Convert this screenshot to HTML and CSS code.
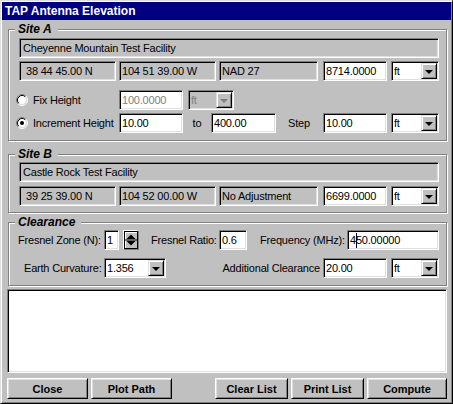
FILE: index.html
```html
<!DOCTYPE html>
<html lang="en">
<head>
    <meta charset="UTF-8">
    <title>TAP Antenna Elevation</title>
    <link rel="stylesheet" href="styles.css">
</head>
<body>
<div class="window">
    <div class="titlebar">TAP Antenna Elevation</div>
    <div class="main">
        <!-- site A -->
        <div class="group site-a">
            <div class="legend">Site A</div>
            <div class="field ro name">Cheyenne Mountain Test Facility</div>
            <div class="row">
                <div class="field ro coord indent">38 44 45.00 N</div>
                <div class="field ro coord">104 51 39.00 W</div>
                <div class="field ro datum">NAD 27</div>
                <div class="field elev">8714.0000</div>
                <div class="combo unit"><span>ft</span><i class="drop"></i></div>
            </div>
            <div class="row fix-row">
                <span class="radio">
                    <svg width="12" height="12" viewBox="0 0 12 12">
                        <circle cx="6" cy="6" r="4.5" fill="#fff"/>
                        <path d="M2.11 9.89A5.5 5.5 0 0 1 9.89 2.11" fill="none" stroke="#808080"/>
                        <path d="M9.89 2.11A5.5 5.5 0 0 1 2.11 9.89" fill="none" stroke="#fff"/>
                        <path d="M2.82 9.18A4.5 4.5 0 0 1 9.18 2.82" fill="none" stroke="#000"/>
                        <path d="M9.18 2.82A4.5 4.5 0 0 1 2.82 9.18" fill="none" stroke="#dfdfdf"/>
                    </svg>
                </span>
                <span class="radio-label">Fix Height</span>
                <div class="field num dim">100.0000</div>
                <div class="combo unit-sm off"><span>ft</span><i class="drop"></i></div>
            </div>
            <div class="row">
                <span class="radio">
                    <svg width="12" height="12" viewBox="0 0 12 12">
                        <circle cx="6" cy="6" r="4.5" fill="#fff"/>
                        <path d="M2.11 9.89A5.5 5.5 0 0 1 9.89 2.11" fill="none" stroke="#808080"/>
                        <path d="M9.89 2.11A5.5 5.5 0 0 1 2.11 9.89" fill="none" stroke="#fff"/>
                        <path d="M2.82 9.18A4.5 4.5 0 0 1 9.18 2.82" fill="none" stroke="#000"/>
                        <path d="M9.18 2.82A4.5 4.5 0 0 1 2.82 9.18" fill="none" stroke="#dfdfdf"/>
                        <circle cx="6" cy="6" r="2" fill="#000"/>
                    </svg>
                </span>
                <span class="radio-label">Increment Height</span>
                <div class="field num">10.00</div>
                <span class="lbl to">to</span>
                <div class="field num wide">400.00</div>
                <span class="lbl step">Step</span>
                <div class="field elev">10.00</div>
                <div class="combo unit"><span>ft</span><i class="drop"></i></div>
            </div>
        </div>

        <!-- site B -->
        <div class="group site-b">
            <div class="legend">Site B</div>
            <div class="field ro name">Castle Rock Test Facility</div>
            <div class="row">
                <div class="field ro coord indent">39 25 39.00 N</div>
                <div class="field ro coord">104 52 00.00 W</div>
                <div class="field ro datum">No Adjustment</div>
                <div class="field elev">6699.0000</div>
                <div class="combo unit"><span>ft</span><i class="drop"></i></div>
            </div>
        </div>

        <!-- clearance -->
        <div class="group clearance">
            <div class="legend">Clearance</div>
            <div class="row first">
                <span class="lbl zone">Fresnel Zone (N):</span>
                <div class="field zone-val">1</div>
                <div class="spin">
                    <div class="spin-face">
                        <svg width="12" height="16" viewBox="0 0 12 16">
                            <polygon points="1.5,7 10.5,7 6,2.5" fill="#000"/>
                            <rect x="0" y="7.5" width="12" height="1" fill="#000"/>
                            <polygon points="1.5,9 10.5,9 6,13.5" fill="#000"/>
                        </svg>
                    </div>
                </div>
                <span class="lbl ratio">Fresnel Ratio:</span>
                <div class="field ratio-val">0.6</div>
                <span class="lbl freq">Frequency (MHz):</span>
                <div class="field freq-val">4<span class="caret"></span>50.00000</div>
            </div>
            <div class="row second">
                <span class="lbl curve">Earth Curvature:</span>
                <div class="combo curve-val"><span>1.356</span><i class="drop"></i></div>
                <span class="lbl extra">Additional Clearance</span>
                <div class="field elev">20.00</div>
                <div class="combo unit"><span>ft</span><i class="drop"></i></div>
            </div>
        </div>

        <div class="list"></div>

        <div class="buttons">
            <div class="btn wide-btn">Close</div>
            <div class="btn wide-btn">Plot Path</div>
            <div class="btn clear">Clear List</div>
            <div class="btn">Print List</div>
            <div class="btn compute">Compute</div>
        </div>
    </div>
</div>
</body>
</html>
```

FILE: styles.css
```css
html,body{
    margin: 0;
    padding: 0;
}
body{
    font-family: "Liberation Sans", Arial, sans-serif;
    font-size: 11px;
    letter-spacing: -0.2px;
    color: #000;
    background: #c0c0c0;
}
.window{
    width: 453px;
    height: 404px;
    box-sizing: border-box;
    border: 1px solid;
    border-color: #dfdfdf #000 #000 #dfdfdf;
    box-shadow: inset 1px 1px #fff, inset -1px -1px #808080;
    padding: 1px;
    background: #c0c0c0;
}
.titlebar{
    height: 18px;
    line-height: 18px;
    padding-left: 3px;
    background: #000080;
    color: #fff;
    font-weight: bold;
    font-size: 12px;
    letter-spacing: 0;
}
.main{
    padding: 0 4px 0 5px;
}

/* group boxes */
.group{
    margin: 9px 0 0 1px;
    border: 1px solid #808080;
    box-shadow: inset 1px 1px #fff, 1px 1px #fff;
    padding: 0 7px 7px 10px;
}
.site-b{
    margin-top: 13px;
    padding-bottom: 6px;
}
.clearance{
    margin-top: 9px;
}
.legend{
    width: max-content;
    margin: -8px 0 0 -4px;
    padding: 0 6px 0 3px;
    background: #c0c0c0;
    font-size: 12px;
    line-height: 14px;
    font-weight: bold;
    font-style: italic;
    letter-spacing: 0;
}
.row{
    display: flex;
    align-items: center;
    margin-top: 3px;
}
.row > *{
    flex-shrink: 0;
}
.site-b .row{
    margin-top: 4px;
}
.fix-row{
    margin-top: 9px;
}
.clearance .first{
    margin-top: 1px;
}
.clearance .second{
    margin-top: 8px;
}

/* sunken edit boxes */
.field,.combo,.list{
    box-sizing: border-box;
    border: 1px solid;
    border-color: #808080 #fff #fff #808080;
    box-shadow: inset 1px 1px #000, inset -1px -1px #dfdfdf;
    background: #fff;
}
.field,.combo{
    height: 20px;
    display: flex;
    align-items: center;
    white-space: nowrap;
    overflow: hidden;
}
.field{
    padding: 0 2px;
}
.ro{
    background: #c0c0c0;
}
.name{
    margin-top: 2px;
    padding-left: 3px;
}
.site-b .name{
    margin-top: 1px;
}
.coord{
    width: 97px;
}
.coord + .coord,.coord + .datum{
    margin-left: 3px;
}
.indent{
    padding-left: 6px;
}
.datum{
    width: 99px;
}
.elev{
    width: 64px;
    margin-left: 5px;
}
.num{
    width: 64px;
}
.wide{
    width: 65px;
}
.dim{
    color: #808080;
}

/* drop-down boxes */
.combo{
    justify-content: space-between;
    padding-left: 2px;
}
.unit{
    width: 48px;
    margin-left: 4px;
}
.unit-sm{
    width: 46px;
    margin-left: 5px;
}
.drop{
    width: 16px;
    height: 16px;
    box-sizing: border-box;
    margin-right: 1px;
    border: 1px solid;
    border-color: #dfdfdf #000 #000 #dfdfdf;
    box-shadow: inset 1px 1px #fff, inset -1px -1px #808080;
    background: #c0c0c0;
    display: flex;
    align-items: center;
    justify-content: center;
}
.drop::after{
    content: "";
    border-top: 4px solid #000;
    border-left: 4px solid transparent;
    border-right: 4px solid transparent;
    margin-top: 1px;
}
.off{
    background: #c0c0c0;
    color: #808080;
}
.off .drop::after{
    border-top-color: #808080;
}

/* radio buttons */
.radio{
    width: 12px;
    height: 12px;
    margin-left: -3px;
    display: flex;
}
.radio-label{
    width: 86px;
    margin-left: 5px;
    white-space: nowrap;
}
.lbl{
    white-space: nowrap;
    box-sizing: border-box;
}
.to{
    width: 28px;
    text-align: center;
}
.step{
    width: 42px;
    padding-left: 12px;
}

/* clearance row */
.zone{
    width: 86px;
    margin-left: -1px;
}
.zone-val{
    width: 15px;
}
.spin{
    width: 16px;
    height: 20px;
    box-sizing: border-box;
    margin-left: 4px;
    border: 1px solid;
    border-color: #fff #808080 #808080 #fff;
    display: flex;
}
.spin-face{
    flex: 1;
    border: 1px solid #000;
    box-shadow: inset 1px 1px #fff;
    background: #c0c0c0;
    display: flex;
}
.ratio{
    width: 80px;
    padding-left: 12px;
}
.ratio-val{
    width: 28px;
}
.freq{
    width: 100px;
    padding-left: 13px;
}
.freq-val{
    width: 92px;
}
.caret{
    display: inline-block;
    width: 1px;
    height: 15px;
    margin-right: -1px;
    background: #000;
}
.curve{
    width: 85px;
    padding-left: 5px;
}
.curve-val{
    width: 62px;
}
.extra{
    width: 157px;
    padding-right: 3px;
    text-align: right;
}
.extra + .elev{
    margin-left: 0;
}

/* list and buttons */
.list{
    margin-top: 3px;
    height: 84px;
}
.buttons{
    display: flex;
    margin-top: 5px;
}
.btn{
    width: 73px;
    height: 21px;
    box-sizing: border-box;
    margin-left: 3px;
    border: 1px solid;
    border-color: #fff #000 #000 #fff;
    box-shadow: inset 1px 1px #dfdfdf, inset -1px -1px #808080;
    background: #c0c0c0;
    display: flex;
    align-items: center;
    justify-content: center;
    font-weight: bold;
    letter-spacing: 0;
}
.wide-btn{
    width: 81px;
}
.wide-btn:first-child{
    margin-left: 0;
}
.clear{
    margin-left: auto;
}
.compute{
    width: 80px;
}
```
